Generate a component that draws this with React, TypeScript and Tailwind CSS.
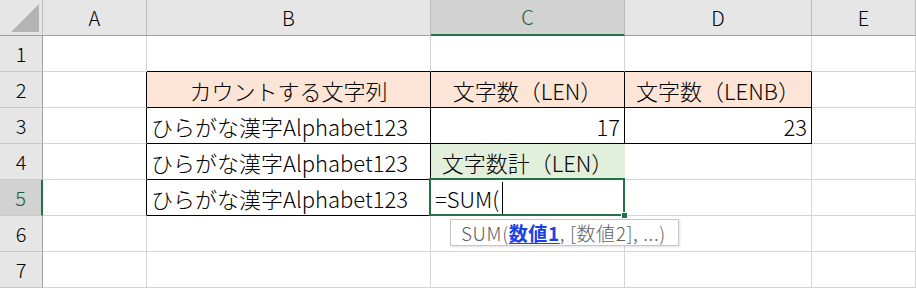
import React from "react";

type CellSpec = {
  text?: React.ReactNode;
  align?: "left" | "center" | "right";
  bg?: string;
  r?: string;
  b?: string;
  extra?: React.ReactNode;
};

const GRID_R = "border-r-[#d4d4d4]";
const GRID_B = "border-b-[#d4d4d4]";
const BLACK_R = "border-r-black";
const BLACK_B = "border-b-black";

const TEXT = "ひらがな漢字Alphabet123";

function Cell({ spec }: { spec: CellSpec }) {
  const justify =
    spec.align === "center"
      ? "justify-center"
      : spec.align === "right"
      ? "justify-end pr-[4px]"
      : "justify-start pl-[4px]";
  return (
    <div
      className={`relative flex h-[36px] items-center whitespace-nowrap border-r border-b border-t-0 border-l-0 text-[22px] leading-none font-light text-black ${justify} ${
        spec.bg ?? "bg-white"
      } ${spec.r ?? GRID_R} ${spec.b ?? GRID_B}`}
    >
      {spec.text}
      {spec.extra}
    </div>
  );
}

function RowHeader({ n, active }: { n: number; active?: boolean }) {
  return (
    <div
      className={
        active
          ? "flex h-[36px] items-center justify-center border-b border-r-2 border-b-[#c8c8c8] border-r-[#217346] bg-[#d2d2d2] text-[20px] font-light leading-none text-[#1d5e3a]"
          : "flex h-[36px] items-center justify-center border-b border-r border-b-[#c8c8c8] border-r-[#a0a0a0] bg-[#e6e6e6] text-[20px] font-light leading-none text-black"
      }
    >
      {n}
    </div>
  );
}

function ColHeader({ label, active }: { label: string; active?: boolean }) {
  return (
    <div
      className={
        active
          ? "flex h-[36px] items-center justify-center border-r border-b-2 border-r-[#bcbcbc] border-b-[#217346] bg-[#d2d2d2] text-[20px] font-light leading-none text-[#1d5e3a]"
          : "flex h-[36px] items-center justify-center border-r border-b border-r-[#bcbcbc] border-b-[#9f9f9f] bg-[#e6e6e6] text-[20px] font-light leading-none text-black"
      }
    >
      {label}
    </div>
  );
}

function ActiveCellFrame() {
  return (
    <>
      <div className="pointer-events-none absolute -top-[2px] -left-[2px] -right-[1px] -bottom-[1px] z-10 border-2 border-[#217346]" />
      <div className="absolute -right-[4px] -bottom-[4px] z-20 h-[7px] w-[7px] border border-white bg-[#217346]" />
      <div className="absolute left-[19px] top-[39px] z-30 flex h-[27px] w-[229px] items-center border border-[#c6c6c6] bg-white pl-[10px] text-[19px] font-light leading-none tracking-[0.6px] text-[#5f5f5f] shadow-[1px_1px_2px_rgba(0,0,0,0.12)]">
        <span>SUM(</span>
        <span className="font-bold text-[#1d3fe8] underline underline-offset-2">数値1</span>
        <span>, [数値2], ...)</span>
      </div>
    </>
  );
}

const rows: CellSpec[][] = [
  // row 1
  [{}, { b: BLACK_B }, { b: BLACK_B }, { b: BLACK_B }, {}],
  // row 2
  [
    { r: BLACK_R },
    { text: "カウントする文字列", align: "center", bg: "bg-[#fce4d6]", r: BLACK_R, b: BLACK_B },
    { text: "文字数（LEN）", align: "center", bg: "bg-[#fce4d6]", r: BLACK_R, b: BLACK_B },
    { text: "文字数（LENB）", align: "center", bg: "bg-[#fce4d6]", r: BLACK_R, b: BLACK_B },
    {},
  ],
  // row 3
  [
    { r: BLACK_R },
    { text: TEXT, r: BLACK_R, b: BLACK_B },
    { text: "17", align: "right", r: BLACK_R, b: BLACK_B },
    { text: "23", align: "right", r: BLACK_R, b: BLACK_B },
    {},
  ],
  // row 4
  [
    { r: BLACK_R },
    { text: TEXT, r: BLACK_R, b: BLACK_B },
    { text: "文字数計（LEN）", align: "center", bg: "bg-[#e2efda]", r: "border-r-[#e2efda]" },
    {},
    {},
  ],
  // row 5
  [
    { r: BLACK_R },
    { text: TEXT, r: BLACK_R, b: BLACK_B },
    {
      text: (
        <span className="flex items-center">
          =SUM(
          <span className="ml-[3px] inline-block h-[32px] w-px bg-black" />
        </span>
      ),
      extra: <ActiveCellFrame />,
    },
    {},
    {},
  ],
  // row 6
  [{}, {}, {}, {}, {}],
  // row 7
  [{}, {}, {}, {}, {}],
];

export default function App() {
  return (
    <div
      className="h-[288px] w-[916px] overflow-hidden bg-white"
      style={{ fontFamily: '"Noto Sans CJK JP", "Noto Sans", sans-serif' }}
    >
      <div className="grid grid-cols-[43px_104px_284px_194px_187px_104px]">
        {/* corner with select-all triangle */}
        <div className="flex h-[36px] border-r border-b border-r-[#bcbcbc] border-b-[#9f9f9f] bg-[#e6e6e6]">
          <svg width="42" height="35" viewBox="0 0 42 35">
            <polygon points="11,32 39,32 39,4" fill="#b4b4b4" />
          </svg>
        </div>
        <ColHeader label="A" />
        <ColHeader label="B" />
        <ColHeader label="C" active />
        <ColHeader label="D" />
        <ColHeader label="E" />

        {rows.map((row, i) => (
          <React.Fragment key={i}>
            <RowHeader n={i + 1} active={i === 4} />
            {row.map((spec, j) => (
              <Cell key={j} spec={spec} />
            ))}
          </React.Fragment>
        ))}
      </div>
    </div>
  );
}
